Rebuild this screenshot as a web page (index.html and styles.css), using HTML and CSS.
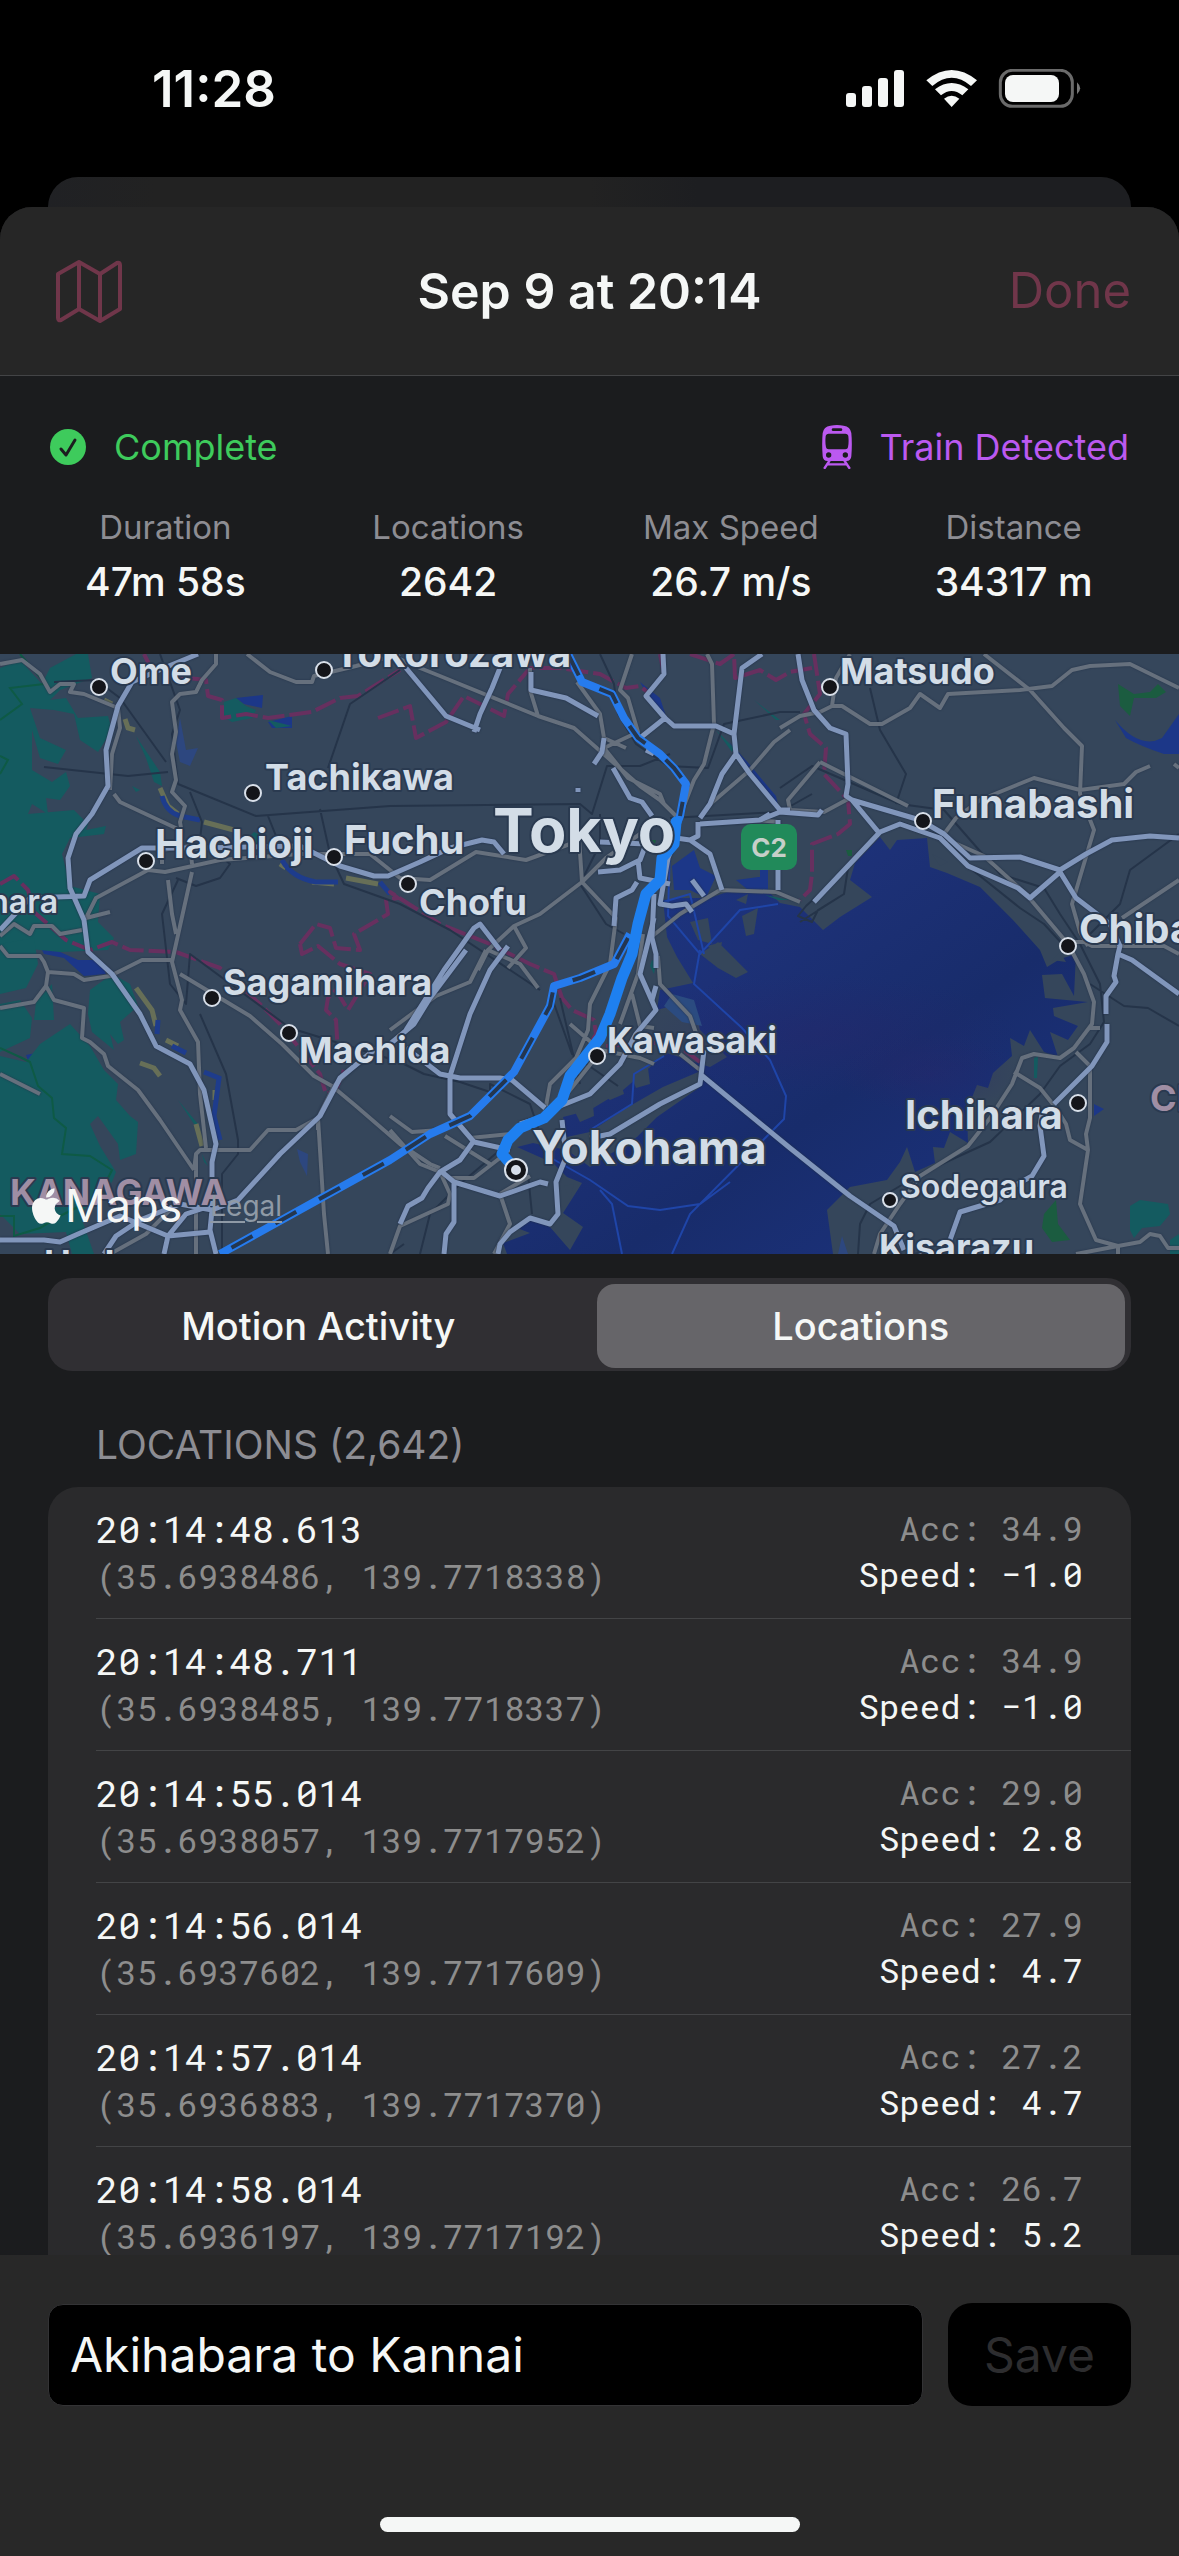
FILE: index.html
```html
<!DOCTYPE html>
<html lang="en">
<head>
<meta charset="utf-8">
<meta name="viewport" content="width=device-width, initial-scale=1">
<title>Sep 9 at 20:14</title>
<link rel="stylesheet" href="styles.css">
</head>
<body>
<div class="screen">
  <div class="status-bar">
    <time class="clock">11:28</time>
    <svg class="status-icons" viewBox="0 0 705 117" role="img" aria-label="Signal, Wi-Fi and battery">
      <g fill="#f5f7f6">
        <rect x="0" y="72" width="30" height="42" rx="9"/>
        <rect x="48" y="51" width="30" height="63" rx="9"/>
        <rect x="96" y="27" width="30" height="87" rx="9"/>
        <rect x="144" y="3" width="30" height="111" rx="9"/>
        <path d="M241 34Q317-28 393 34L375 51Q317 2 259 51Z"/>
        <path d="M267 61Q317 23 367 61L349 79Q317 53 285 79Z"/>
        <path d="M294 89Q317 71 340 89L317 114Z"/>
        <rect x="477" y="18" width="162" height="81" rx="24"/>
      </g>
      <rect x="463" y="4" width="216" height="108" rx="36" fill="none" stroke="#6a6a6a" stroke-width="9"/>
      <path d="M693 40Q712 58 693 76Z" fill="#777"/>
    </svg>
  </div>
  <div class="back-card"></div>
  <main class="sheet">
    <header class="nav">
      <button class="nav-map" aria-label="Show map">
        <svg class="map-icon" viewBox="0 0 66 63" fill="none" stroke="#70364a" stroke-width="4" stroke-linejoin="round">
          <path d="M2 14L23 2L44 14L61 3Q64 2 64 5V49L44 61L23 49L5 60Q2 61 2 58ZM23 2V49M44 14V61"/>
        </svg>
      </button>
      <h1 class="nav-title">Sep 9 at 20:14</h1>
      <button class="nav-done">Done</button>
    </header>

    <section class="summary">
      <div class="flags">
        <span class="flag flag-complete">
          <svg class="check-icon" viewBox="0 0 36 36"><circle cx="18" cy="18" r="18" fill="#3ecb5c"/><path d="M11 20L16 26L25 11" fill="none" stroke="#1c1d1f" stroke-width="3" stroke-linecap="round" stroke-linejoin="round"/></svg>
          Complete
        </span>
        <span class="flag flag-train">
          <svg class="train-icon" viewBox="0 0 90 132" fill="#bb59f0"><path fill-rule="evenodd" d="M25 2Q45-2 65 2Q85 5 88 24Q91 56 88 94Q87 108 73 108H17Q3 108 2 94Q-1 56 2 24Q5 5 25 2ZM34 10Q29 10 29 14Q29 18 34 18H56Q61 18 61 14Q61 10 56 10ZM20 26Q12 26 11 34Q9 52 12 67Q13 73 20 73H70Q77 73 78 67Q81 52 79 34Q78 26 70 26ZM20 82A8 8 0 1 0 20 98A8 8 0 1 0 20 82ZM70 82A8 8 0 1 0 70 98A8 8 0 1 0 70 82Z"/><path d="M22 108L8 129M68 108L82 129M16 118H74" fill="none" stroke="#bb59f0" stroke-width="7" stroke-linecap="round"/></svg>
          Train Detected
        </span>
      </div>
      <dl class="stats">
        <div class="stat"><dt>Duration</dt><dd>47m 58s</dd></div>
        <div class="stat"><dt>Locations</dt><dd>2642</dd></div>
        <div class="stat"><dt>Max Speed</dt><dd>26.7 m/s</dd></div>
        <div class="stat"><dt>Distance</dt><dd>34317 m</dd></div>
      </dl>
    </section>

    <div class="map">
      <svg class="map-canvas" viewBox="0 0 1179 600" preserveAspectRatio="xMidYMid slice" role="img" aria-label="Train route from Akihabara to Kannai">
        <defs>
          <linearGradient id="sea" x1="0" y1="0" x2="1" y2="1">
            <stop offset="0" stop-color="#1c3788"/><stop offset=".35" stop-color="#1d3177"/><stop offset=".6" stop-color="#182c6b"/><stop offset="1" stop-color="#1d3483"/>
          </linearGradient>
          <radialGradient id="deep"><stop offset="0" stop-color="#28266b" stop-opacity=".4"/><stop offset="1" stop-color="#28266b" stop-opacity="0"/></radialGradient>
        </defs>
        <rect width="1179" height="600" fill="#35465b"/>

        <!-- Tokyo Bay -->
        <path fill="url(#sea)" d="M663 246L680 244L710 244L727 238L770 239L780 249L800 253L823 276L840 263L872 243L850 226L855 209L880 183L890 196L897 186L927 184L930 213L947 219L980 233L1013 266L1040 296L1047 313L1060 305L1076 300L1074 342L1062 320L1042 321L1045 344L1088 348L1053 354L1054 362L1078 372L1068 386L1050 378L1058 403L1044 398L1030 376L1024 392L1010 384L1012 402L993 419L988 434L977 431L967 456L968 489L950 478L944 494L933 493L935 509L915 518L907 493L900 508L887 526L850 533L827 556L833 600H507L503 589L530 579L517 574L533 563L550 573L570 596L583 573L563 559L582 529L567 523L553 509L517 493L533 489L567 496L590 513L637 483L657 463L700 433L703 416L663 433L623 456L590 478L567 483L563 463L590 456L623 436L643 419L667 399L710 413L727 403L700 376L693 346L657 356L660 336L693 329L677 303L667 283Z"/>
        <ellipse cx="820" cy="380" rx="200" ry="60" fill="url(#deep)"/>
        <ellipse cx="930" cy="420" rx="90" ry="40" fill="url(#deep)"/>
        <g fill="#35465b">
          <path d="M690 268L708 264L712 290L698 286ZM742 262L758 254L754 280L746 282ZM700 300L718 288L736 306L748 318L736 324L718 314ZM707 292L722 288L720 300ZM736 246L748 240L746 250ZM932 200L948 208L940 212ZM1060 298L1052 306L1066 308Z"/>
          <path d="M572 452L592 440L594 462L580 468ZM602 440L620 426L624 440L610 446ZM632 424L648 414L650 430L636 434ZM540 480L556 474L562 488L548 490ZM564 532L574 530L570 546Z"/>
        </g>
        <path d="M672 340L694 346L702 372L682 368L664 352Z" fill="#2b4b80"/>
        <g fill="none" stroke="#1f45a8" stroke-width="2">
          <path d="M670 190L668 262L700 300L740 256L778 250M663 248L690 240L704 300M700 296L694 330L742 374L770 406L786 442L784 465L690 560L672 600M544 500L590 526L628 552L660 556L700 550L730 528M600 536L612 550L622 600M590 476L632 450L634 420L664 402"/>
        </g>
        <path fill="#1c3788" d="M672 212L694 196L700 214L716 222L706 244L690 236L674 236ZM736 226L766 222L766 240L748 236ZM760 226V212L768 212V238ZM236 44L263 41L262 54L244 50ZM268 68L292 62L292 74L272 74ZM1115 66Q1140 96 1162 84L1179 60V100L1164 100Q1140 92 1126 84ZM26 401L60 394L68 384L56 412L52 414L70 432L64 432L48 418L30 412ZM38 288L78 306L100 306L106 320L84 322L64 304L44 300ZM1094 450L1104 455L1094 462ZM640 28L650 46L666 62L660 44ZM729 88L750 120L780 160L776 142L744 104ZM944 182L960 192L966 204Z"/>
        <path fill="#2d477f" d="M180 64L186 96L198 94L190 112L180 108L176 88ZM297 495L308 500L307 522L300 508ZM842 582L848 600H838Z"/>

        <!-- Hills and parkland -->
        <g fill="#145b60">
          <path d="M0 14L20 6L42 30L50 14L76 0H88L92 24L60 36L50 46L66 44L78 64L108 62L112 76L98 98L80 86L74 60L54 56L30 54L40 84L66 96L58 110L40 104L32 76V116L52 128L66 118L70 132L60 146L46 144L48 160L32 150L28 160L74 156L84 166L90 164L86 176L106 172L104 180L70 184L62 200L70 232L100 240L98 268L114 284L108 296L60 298L0 292V14Z"/>
          <path d="M0 290L34 284L38 310L26 334L0 340ZM0 350L20 346L32 364L30 384L0 398ZM36 348L52 330L54 366L34 366ZM90 336L112 320L130 330L138 352L120 368L124 386L118 390L110 380L114 396L92 378L88 360ZM40 390L70 370L90 392L104 416L118 430L116 446L130 462L138 468L136 500L120 506L118 490L98 462L90 470L100 492L116 518L112 528L80 560L94 600H72L66 578L20 580L0 560V402L26 408Z"/>
          <path d="M224 48L236 44L246 52L256 56L252 64L232 68L222 62ZM268 66L292 72L276 74ZM1130 552L1140 546L1168 550L1170 560L1160 572L1142 574L1134 584L1130 576ZM1170 586L1179 580V600H1170ZM254 178L262 182L264 194L246 186ZM136 82L160 118L162 132L154 128L146 104ZM132 132L140 136L136 138ZM754 46L780 66L776 66ZM716 76L734 94L732 98ZM765 241L790 246L778 246ZM652 306L656 308L654 320L650 312ZM1034 404L1038 402L1037 424L1034 424ZM178 446L198 470L194 470ZM202 500L208 512L204 508Z"/>
        </g>
        <path fill="#1b5c40" d="M1118 30L1134 40L1150 38L1158 30L1166 38L1156 44L1134 44L1130 62L1120 52ZM1044 560L1056 546L1058 570L1070 586L1052 588L1042 574ZM652 186L656 186L655 190ZM846 196L852 196V202H848Z"/>
        <g fill="none" stroke="#676f57" stroke-width="5">
          <path d="M104 46L112 50M125 65L128 74L135 76M160 134L168 152L178 160M204 168L234 176M280 210L286 214M346 224L378 230M136 334L152 356L156 372M166 386L178 392M140 409L154 414L160 422M215 436V446M196 470L202 492M312 228L334 230"/>
        </g>
        <g fill="none" stroke="#1e3c8c" stroke-width="5"><path d="M162 142Q166 158 180 162L200 166M282 206Q292 224 316 228L338 228M380 228L390 240M158 366L157 380M172 392L186 399M204 418L219 424L214 462L220 486"/></g>
        <g fill="none" stroke="#0e5a45" stroke-width="2"><path d="M0 66L22 50L10 34L44 30M20 0L46 30M0 102L8 106L0 120M0 394L22 404L30 408L38 432L52 444L54 464L66 474L62 500L90 502L112 516L106 528L104 540L60 562L40 574L14 582V562L0 562"/></g>

        <!-- Prefecture borders -->
        <g class="border">
          <path d="M144 0L150 12L170 22L206 26L208 42L222 46L222 64L246 60L268 64L312 58L340 44L358 42L400 16M378 64L410 52L416 84L446 68L464 42L504 62L508 40L530 14L560 14L600 20L626 34L640 32L650 40M660 0L664 20L656 30M690 0L720 10L734 0L735 24L760 16L776 26L790 18L812 14M814 0L820 40L804 60L810 80L826 94L824 120L848 146L850 170L838 180L812 190V220L810 236L800 246"/>
          <path d="M0 230L14 222L28 236L34 258L66 286L90 296L112 288L130 296L176 298L220 314L260 350L280 370L304 400L320 420L326 440L336 436L344 416M300 290L316 270L330 274L336 294L360 296L354 280L388 260L386 246L398 244L390 238L440 270L490 290L530 310L554 320L562 344L572 356L594 366L596 380L590 390M300 290L302 300L318 292L340 310L370 320L348 356L336 336L328 344L326 356L336 366L338 400M606 392L670 388L684 396L700 408"/>
        </g>

        <!-- Railways -->
        <g class="rail">
          <path d="M54 28L96 26L120 44L166 108M44 113L128 122L168 118M160 0L180 56L172 80L178 130L256 162L390 152L580 150L592 160L607 112L640 112L670 100M190 138L202 168L200 186L230 210L220 224L196 232L176 224M268 162L276 182L302 202M320 155L330 200L344 230L400 250L450 276L540 336M328 114L350 50L400 16M600 0L614 30L618 60L636 90L668 112L708 114L724 70L780 58L800 58M178 226L162 260L170 330L186 350L190 300L290 374L400 408L424 420L460 428L490 438L490 430L530 450L540 480M200 360L226 420L238 486L238 500L222 520L222 600M552 344L572 400L618 432M560 344L580 430M600 160L600 190L580 230L606 270L624 280M870 34L880 76L906 120L896 150M780 134L812 112L900 150L944 156L1000 220L1044 234L1060 260L1080 290L1100 330L1104 368L1090 390L1060 412L1040 440L990 488L920 520L870 550L860 570L858 600M844 240L848 214L806 252L798 262L812 268L818 256ZM844 240L800 268M900 168L940 182L960 206L1020 254L1044 270L1066 294M1179 180L1130 216L1120 250L1080 290M1090 330L1124 352L1148 354L1179 372M670 164L780 158L812 140M390 600L404 590M528 520L532 560M500 496L460 530L430 560L420 600"/>
        </g>

        <!-- Trunk roads -->
        <g class="road">
          <path d="M0 10L22 6L40 20L50 38L60 30L74 30L70 38L84 40L118 54L120 74L112 100L110 136M216 0L216 10L202 26L196 38L180 40L172 48L176 78L172 100L176 126L172 138L185 152L180 168L182 180M114 140L120 148L180 176M247 0L270 18L296 28L312 28L314 22L356 12L400 0M148 216L165 218L220 206L300 200L370 200L400 224L430 226L476 198L526 206L570 190M148 216L96 244L86 264L110 258M162 210V196L190 192L192 210M192 218L172 308L182 346L180 356L198 388L200 440L206 494M168 226L172 260L176 280M172 306L142 306L110 322L84 326L74 320L48 318L44 308L40 302L8 302L0 292M48 318L46 332L34 348L0 354M46 332L54 346L84 354L82 384L90 388L104 400L108 412L138 436L160 466L194 516M180 320L250 362L282 390L314 422L332 432L356 452L400 490L430 510L440 514"/>
          <path d="M0 282L14 270L30 280L34 272L52 272L60 280L82 276M390 0L410 10L440 22L538 62L574 74L640 132L660 146L676 162M530 14L530 36L538 62M577 28L600 60L604 84M632 0L620 36L628 44L638 78L604 94L628 124L660 140L664 150M604 84L626 94M707 0L712 10L714 70L704 110L694 126L676 172M780 168L754 166L700 170M790 76L774 88L750 116L708 152M577 154L582 228L606 204L640 180M582 228L540 260L514 272L488 296L478 316M514 272L526 294L508 314M582 228L616 264L610 310L590 350L588 376L576 404L550 430L546 452M488 296L520 310L538 334M486 296L470 328L436 342L390 376M643 280L638 320L620 370M632 340L640 372L654 374M570 370L600 396L640 404L654 410M597 402L570 436L546 464L510 480L470 484M650 284L680 260L720 236L776 238L800 248M658 302L660 330L690 362L700 390M680 400L700 416"/>
          <path d="M780 74L800 62L820 58L832 52L842 52L870 70L882 70L910 54L920 40L940 54L948 40L1020 36L1052 32L1072 16L1090 12L1130 10L1179 34M984 0L1030 36L1064 74L1082 92L1080 140L1094 176L1072 250L1080 278L1088 292M832 52L836 24L850 0M820 108L908 152M820 108L788 146L790 156L824 158L850 144M944 180L956 164L980 146L1034 124L1080 136L1124 130L1136 118L1150 112M948 186L984 202L1026 240L1068 290L1084 320L1094 348L1092 370L1074 394L1060 404L1034 400L1022 404L1012 430L990 464L968 492L920 522L900 550L880 580L874 600M1066 288L1084 288L1092 292L1164 292L1179 300M1122 264L1179 226M1014 418L1040 434L1056 454L1066 470L1070 486L1088 496M1088 374H1100M1076 398L1090 412V464L1086 480L1088 496L1080 550L1096 586L1118 592L1140 588L1150 580L1160 582L1168 594L1179 594M1118 592V600M1118 592L1076 600M1174 110L1179 114"/>
          <path d="M0 420L40 440M318 476L318 464L334 432L350 416L380 394M194 516L196 500L200 496H250L268 476H296L318 464M318 464L324 560L328 600M196 500V600M110 600L146 580L170 556M390 476L420 510L440 518L450 540L448 550L400 572L390 600M445 482L490 510M500 540L510 570L494 600M390 462L412 478L440 476M450 524L474 524L500 504M500 540L530 522"/>
        </g>

        <!-- Expressways -->
        <g class="highway">
          <path d="M198 0L164 14L132 28L118 52L106 96L108 132L92 160L76 180L68 204L70 234L84 266L88 298L112 320L140 360L156 392L190 410L204 436L216 490L212 508L212 552M0 276L30 244L84 242L90 226L142 194H200L300 192L340 212L374 222H388L420 208L450 194L482 186L494 188L504 200M406 14L446 62L480 76M474 78L480 60L492 34L500 14M531 18V36L566 44L598 62M604 84L602 98L594 110M578 138V134M613 114L630 144L642 148L652 162M663 0L664 20L646 42L665 64L640 84M665 64L674 72L716 72L734 80L736 100L750 120L780 156H790M734 80L742 14L762 0M736 100L722 120L710 150L700 164M700 170L760 166L780 158L818 161L822 156M778 166V236M698 168V182L690 186L676 184L668 204M690 186L710 200L722 236M692 226L704 242M668 204L660 250L672 252L686 250L692 258M654 264L640 320L656 356L636 380L620 410L590 440L560 452L540 464L520 470"/>
          <path d="M598 218L620 216L640 206L646 190L600 188M638 206L640 224L670 230M637 228L632 236L616 244L614 272M654 240L652 284L656 300V314M656 332L652 346M466 296L430 344L414 370L390 390M508 292L490 316L470 360L450 422V460L474 488L510 496M500 296L480 270L474 274L444 316L406 376M406 394L440 420L460 424H500L512 426L545 454M388 390L374 396L340 424L320 462L280 500L238 546L212 556L180 550L140 566L116 582L104 600M0 586H44L60 588L78 580L120 562L168 582L210 578M168 582L164 600M168 582L186 560L210 552M212 556L210 576L216 600M473 488L460 506L440 518L428 534L422 544L408 552L400 570M442 518L454 528L500 542L540 528L548 530M454 528V568L446 580L444 600M562 466L564 486L568 498L556 528L558 560L550 570L530 564L510 578L500 590L498 600M590 484L610 480L660 450L700 430L704 396M700 420L790 494L850 542L894 572L904 596M654 100L646 96M760 166L770 160"/>
          <path d="M798 0L802 26L814 56L830 74L846 80L848 130L846 142L852 146L920 166L944 180L970 204L1020 203L1060 216L1086 200L1112 186L1150 182L1179 184M852 146L880 180M814 248L880 178L900 170L940 184L968 212L1018 234L1030 244L1060 218L1076 244L1110 270L1120 292L1118 300L1114 322L1116 328L1106 342L1106 360M1118 300L1132 306L1179 340M1107 370V388L1092 412L1054 450M1042 460L1040 472L1044 502L1032 522L1014 532L1000 546L960 558L950 586"/>
        </g>

        <!-- Recorded route -->
        <g class="route">
          <path class="route-thin" d="M568 0L582 28L612 40L624 64L638 84L660 100L674 114L686 130L680 162L676 172M630 280L614 310L580 324L554 332L550 352L514 418L470 462L430 480L390 506L220 600"/>
          <path class="route-dash" d="M568 0L582 28L612 40L624 64L638 84L660 100L674 114L686 130L680 162M628 284L614 310L580 324L554 332L550 352L514 418L470 462L430 480L390 506L220 600"/>
          <path class="route-main" d="M676 168L674 190L662 204L660 226L646 240L638 270L632 300L622 324L610 360L600 384L570 422L562 446L544 464L520 474L508 486L502 500L516 516"/>
        </g>

        <g class="stops">
          <circle cx="99" cy="33" r="8"/><circle cx="324" cy="16" r="8"/><circle cx="253" cy="139" r="8"/><circle cx="146" cy="207" r="8"/><circle cx="334" cy="203" r="8"/><circle cx="408" cy="230" r="8"/><circle cx="830" cy="33" r="8"/><circle cx="923" cy="167" r="8"/><circle cx="1068" cy="292" r="8"/><circle cx="212" cy="344" r="8"/><circle cx="289" cy="379" r="8"/><circle cx="597" cy="402" r="8"/><circle cx="1078" cy="449" r="8"/><circle cx="890" cy="546" r="7"/>
          <circle cx="516" cy="516" r="11"/><circle class="stop-core" cx="516" cy="516" r="4"/>
        </g>

        <rect x="741" y="170" width="56" height="46" rx="10" fill="#218a5a"/>
        <text class="shield" x="769" y="203" text-anchor="middle">C2</text>

        <g class="place">
          <text x="110" y="30">Ome</text>
          <text class="place-large" x="334" y="13">Tokorozawa</text>
          <text x="265" y="136">Tachikawa</text>
          <text x="419" y="261">Chofu</text>
          <text x="840" y="30">Matsudo</text>
          <text x="223" y="341">Sagamihara</text>
          <text x="299" y="409">Machida</text>
          <text x="607" y="399">Kawasaki</text>
          <text x="879" y="606">Kisarazu</text>
          <text x="44" y="622">Hadano</text>
          <g class="place-large">
            <text x="155" y="204">Hachioji</text>
            <text x="344" y="200">Fuchu</text>
            <text x="932" y="164">Funabashi</text>
            <text x="1079" y="289">Chiba</text>
            <text x="905" y="475">Ichihara</text>
          </g>
          <g class="place-small">
            <text x="58" y="259" text-anchor="end">hara</text>
            <text x="900" y="544">Sodegaura</text>
          </g>
          <text class="place-city" x="532" y="510">Yokohama</text>
          <text class="place-capital" x="493" y="198">Tokyo</text>
          <text class="prefecture" x="10" y="551">KANAGAWA</text>
          <text class="prefecture" x="1150" y="457">CHIBA</text>
        </g>
      </svg>
      <div class="map-credit">
        <svg class="apple-logo" viewBox="0 0 88 108" fill="#f5f7f6"><path d="M68 0Q70 12 62 20Q54 29 43 28Q42 17 50 9Q57 1 68 0ZM80 42Q68 50 69 63Q71 77 87 83Q82 96 73 104Q66 110 56 106Q45 101 35 106Q25 110 18 104Q6 92 1 70Q-3 48 10 36Q22 25 39 33Q44 35 50 32Q70 24 84 38Z"/></svg>
        <span class="map-brand">Maps</span>
        <a class="map-legal" href="#legal">Legal</a>
      </div>
    </div>

    <div class="segments">
      <button class="segment">Motion Activity</button>
      <button class="segment segment-active" aria-pressed="true">Locations</button>
    </div>

    <section class="locations">
      <h2 class="list-title">LOCATIONS (2,642)</h2>
      <ul class="list">
        <li class="row"><div><p class="when">20:14:48.613</p><p class="coords">(35.6938486, 139.7718338)</p></div><div class="readings"><p class="acc">Acc: 34.9</p><p class="speed">Speed: −1.0</p></div></li>
        <li class="row"><div><p class="when">20:14:48.711</p><p class="coords">(35.6938485, 139.7718337)</p></div><div class="readings"><p class="acc">Acc: 34.9</p><p class="speed">Speed: −1.0</p></div></li>
        <li class="row"><div><p class="when">20:14:55.014</p><p class="coords">(35.6938057, 139.7717952)</p></div><div class="readings"><p class="acc">Acc: 29.0</p><p class="speed">Speed: 2.8</p></div></li>
        <li class="row"><div><p class="when">20:14:56.014</p><p class="coords">(35.6937602, 139.7717609)</p></div><div class="readings"><p class="acc">Acc: 27.9</p><p class="speed">Speed: 4.7</p></div></li>
        <li class="row"><div><p class="when">20:14:57.014</p><p class="coords">(35.6936883, 139.7717370)</p></div><div class="readings"><p class="acc">Acc: 27.2</p><p class="speed">Speed: 4.7</p></div></li>
        <li class="row"><div><p class="when">20:14:58.014</p><p class="coords">(35.6936197, 139.7717192)</p></div><div class="readings"><p class="acc">Acc: 26.7</p><p class="speed">Speed: 5.2</p></div></li>
      </ul>
    </section>

    <footer class="toolbar">
      <form class="name-form">
        <input class="name-input" type="text" value="Akihabara to Kannai" aria-label="Trip name">
        <button class="save" type="button" disabled>Save</button>
      </form>
      <div class="home-indicator"></div>
    </footer>
  </main>
</div>
</body>
</html>
```
FILE: styles.css
```css
* {
  box-sizing: border-box;
}

body,
h1,
h2,
p,
ul,
dl,
dd {
  margin: 0;
  padding: 0;
}

body {
  background: #000;
  color: #f5f7f6;
  font-family: Inter, "Liberation Sans", sans-serif;
}

button,
input {
  border: 0;
  padding: 0;
  margin: 0;
  background: none;
  font: inherit;
  color: inherit;
}

svg {
  display: block;
}

.screen {
  display: flex;
  flex-direction: column;
  height: 100vh;
}

/* Status bar */
.status-bar {
  flex: none;
  display: flex;
  justify-content: space-between;
  align-items: center;
  height: 177px;
  padding: 0 98px 0 152px;
}

.clock {
  font-size: 51px;
  line-height: 60px;
  font-weight: 600;
}

.status-icons {
  width: 235px;
  height: 39px;
}

.back-card {
  flex: none;
  height: 30px;
  margin: 0 48px;
  border-radius: 30px 30px 0 0;
  background: linear-gradient(90deg, #202124, #222 10%, #222 50%, #1d1e21 60%);
}

/* Sheet */
.sheet {
  flex: 1;
  min-height: 0;
  display: flex;
  flex-direction: column;
  overflow: hidden;
  border-radius: 32px 32px 0 0;
  background: #1b1c1e;
}

.nav {
  flex: none;
  display: grid;
  grid-template-columns: 1fr auto 1fr;
  align-items: center;
  height: 169px;
  padding: 0 48px;
  border-bottom: 1px solid #434446;
  background: #262626;
}

.nav-map {
  justify-self: start;
  padding: 0 8px;
}

.map-icon {
  width: 66px;
  height: 63px;
}

.nav-title {
  font-size: 50px;
  line-height: 60px;
  font-weight: 600;
}

.nav-done {
  justify-self: end;
  font-size: 49px;
  line-height: 60px;
  color: #70364a;
}

/* Summary */
.summary {
  flex: none;
  height: 278px;
  padding: 47px 50px 0;
}

.flags {
  display: flex;
  justify-content: space-between;
}

.flag {
  display: flex;
  align-items: center;
  gap: 28px;
  height: 48px;
  font-size: 36px;
  line-height: 48px;
}

.flag-complete {
  color: #3ecb5c;
}

.flag-train {
  color: #bb59f0;
}

.check-icon {
  width: 36px;
  height: 36px;
}

.train-icon {
  width: 30px;
  height: 44px;
}

.stats {
  display: grid;
  grid-template-columns: repeat(4, 1fr);
  padding-top: 36px;
  margin: 0 -26px;
  text-align: center;
}

.stat dt {
  color: #8d8d93;
  font-size: 33px;
  line-height: 40px;
}

.stat dd {
  padding-top: 11px;
  font-size: 39px;
  line-height: 48px;
  font-weight: 500;
}

/* Map */
.map {
  position: relative;
  flex: none;
  height: 600px;
  overflow: hidden;
}

.map-canvas {
  width: 100%;
  height: 600px;
}

.road,
.highway,
.rail,
.border,
.route {
  fill: none;
  stroke-linejoin: round;
}

.road {
  stroke: #66707d;
  stroke-width: 4px;
  filter: drop-shadow(0 0 1px #25344a);
}

.highway {
  stroke: #8196bb;
  stroke-width: 5px;
  filter: drop-shadow(0 0 1px #1d2c46);
}

.rail {
  stroke: #253449;
  stroke-width: 2px;
}

.border {
  stroke: #67305f;
  stroke-width: 4px;
  stroke-dasharray: 22px 5px;
}

.route-thin {
  stroke: #267bed;
  stroke-width: 8px;
}

.route-dash {
  stroke: #24364f;
  stroke-width: 4px;
  stroke-dasharray: 24px 26px;
}

.route-main {
  stroke: #1e80f0;
  stroke-width: 11px;
  stroke-linecap: round;
}

.stops circle {
  fill: #14151a;
  stroke: #d9e0ea;
  stroke-width: 2px;
}

.stops .stop-core {
  fill: #d5dcea;
}

.shield {
  fill: #c6cfc9;
  font-size: 26px;
  font-weight: 700;
}

.place {
  fill: #d3dde7;
  stroke: #2a3a50;
  stroke-width: 4px;
  stroke-linejoin: round;
  paint-order: stroke;
  font-size: 36px;
  font-weight: 700;
}

.place-large {
  font-size: 40px;
}

.place-small {
  font-size: 32px;
  font-weight: 600;
}

.place-city {
  font-size: 46px;
}

.place-capital {
  font-size: 61px;
}

.place .prefecture {
  fill: #a08ea4;
  font-size: 36px;
}

.map-credit {
  position: absolute;
  left: 32px;
  bottom: 20px;
  display: flex;
  align-items: center;
  line-height: 56px;
}

.apple-logo {
  width: 29px;
  height: 36px;
}

.map-brand {
  margin: 0 28px 0 4px;
  font-size: 45px;
}

.map-legal {
  color: #8f9aa6;
  font-size: 28px;
  text-underline-offset: 5px;
}

/* Segmented control */
.segments {
  flex: none;
  display: grid;
  grid-template-columns: 1fr 1fr;
  gap: 14px;
  height: 93px;
  margin: 24px 48px 0;
  padding: 6px 6px 3px;
  border-radius: 24px;
  background: #302f33;
}

.segment {
  border-radius: 18px;
  font-size: 38px;
  line-height: 48px;
  font-weight: 500;
}

.segment-active {
  background: #666569;
}

/* Locations list */
.locations {
  flex: 1;
  min-height: 0;
  overflow: hidden;
  padding: 48px 48px 0;
}

.list-title {
  padding: 2px 48px 18px;
  color: #8d8d93;
  font-size: 39px;
  line-height: 48px;
  font-weight: 400;
}

.list {
  list-style: none;
  padding-left: 48px;
  border-radius: 30px 30px 0 0;
  background: #2a2a2c;
}

.row {
  display: flex;
  justify-content: space-between;
  height: 132px;
  padding: 18px 48px 0 0;
  border-bottom: 1px solid #434446;
  font-family: "Roboto Mono", "DejaVu Sans Mono", "Liberation Mono", monospace;
}

.when {
  font-size: 37px;
  line-height: 48px;
}

.coords,
.acc,
.speed {
  font-size: 34px;
  line-height: 46px;
}

.coords,
.acc {
  color: #8d8d8d;
}

.readings {
  text-align: right;
}

/* Bottom toolbar */
.toolbar {
  flex: none;
  height: 301px;
  padding: 48px 48px 0;
  background: #282828;
}

.name-form {
  display: flex;
  align-items: center;
  gap: 25px;
}

.name-input {
  flex: 1;
  min-width: 0;
  height: 102px;
  padding: 0 21px;
  border: 1px solid #333335;
  border-radius: 15px;
  background: #000;
  font-size: 48px;
}

.save {
  width: 183px;
  height: 103px;
  border-radius: 24px;
  background: #000;
  color: #2d2d2f;
  font-size: 48px;
}

.home-indicator {
  width: 420px;
  height: 15px;
  margin: 111px auto 0;
  border-radius: 8px;
  background: #f5f7f6;
}
```
